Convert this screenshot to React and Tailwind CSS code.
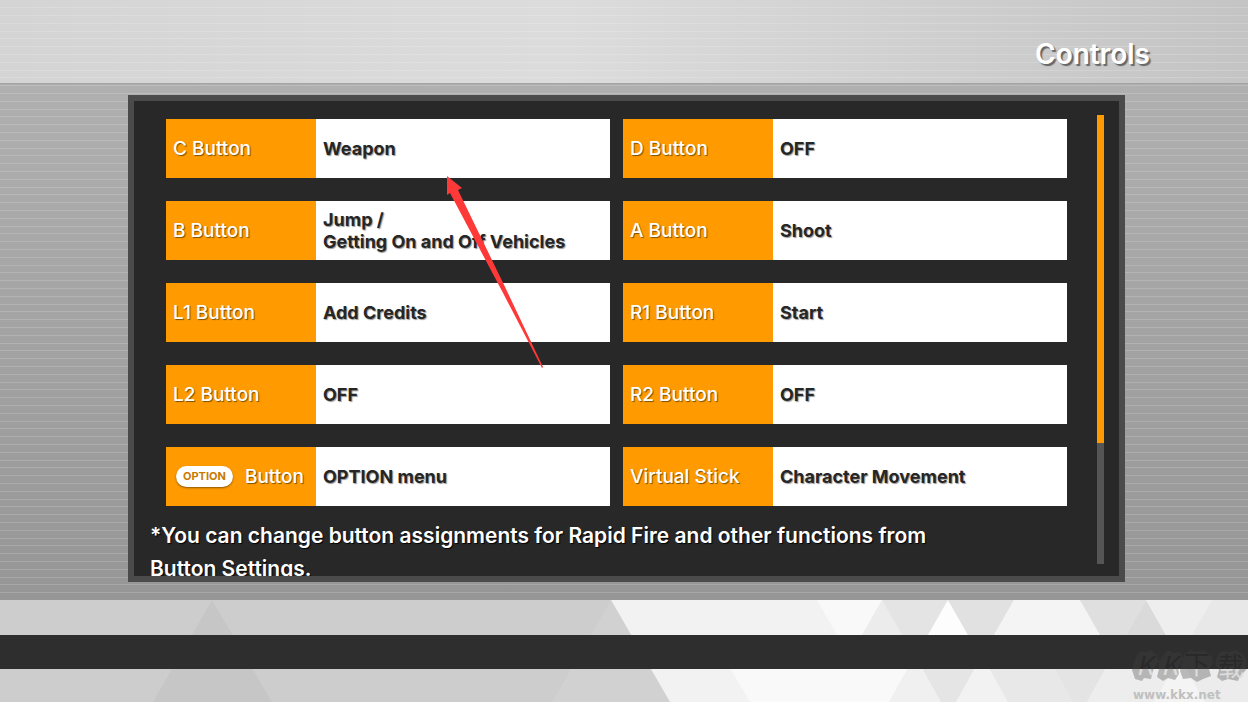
const rows = [
  { id: "c", label: "C Button", value: "Weapon" },
  { id: "d", label: "D Button", value: "OFF" },
  { id: "b", label: "B Button", value: "Jump /\nGetting On and Off Vehicles" },
  { id: "a", label: "A Button", value: "Shoot" },
  { id: "l1", label: "L1 Button", value: "Add Credits" },
  { id: "r1", label: "R1 Button", value: "Start" },
  { id: "l2", label: "L2 Button", value: "OFF" },
  { id: "r2", label: "R2 Button", value: "OFF" },
  { id: "option", badge: "OPTION", label: "Button", value: "OPTION menu" },
  { id: "stick", label: "Virtual Stick", value: "Character Movement" },
];

export default function App() {
  return (
    <div className="relative flex h-screen flex-col overflow-hidden bg-linear-to-b from-[#b4b4b4] to-[#919191] font-['Inter','Liberation_Sans',sans-serif]">
      <header className="flex h-[83px] shrink-0 items-center justify-end bg-linear-to-r from-[#d4d4d4] via-[#dcdcdc] via-45% to-[#c4c4c4] pt-6 pr-[98px] shadow-[0_1px_1px_#a4a4a4]">
        <h1 className="relative z-10 text-[28px] leading-8 font-semibold text-white [text-shadow:2px_2px_1px_#666]">Controls</h1>
      </header>
      <Stripes />

      <main className="relative flex min-h-0 flex-1 pt-3 pr-[123px] pb-[18px] pl-32">
        <section className="flex min-w-0 flex-1 overflow-hidden border-[6px] border-[#4b4b4b] bg-[#282828]">
          <div className="min-w-0 flex-1 pt-[18px] pl-4">
            <dl className="grid grid-cols-2 gap-x-[13px] gap-y-[23px] pl-4">
              {rows.map((row) => (
                <Assignment key={row.id} {...row} />
              ))}
            </dl>
            <p className="mt-[13px] max-w-[820px] text-[21px] leading-[33px] font-semibold text-white [text-shadow:1px_1px_1px_#000]">
              *You can change button assignments for Rapid Fire and other functions from Button Settings.
            </p>
          </div>
          <div className="mt-3.5 mr-[15px] mb-3 ml-[30px] flex w-[7px] flex-col bg-[#555]">
            <div className="h-[73%] bg-[#ff9b00]" />
          </div>
        </section>
      </main>

      <footer className="relative flex h-[102px] shrink-0 flex-col pt-[35px]">
        <Triangles />
        <div className="relative h-[34px] bg-[#2e2e2e]" />
        <Watermark />
      </footer>

      <Arrow />
    </div>
  );
}

function Assignment({ label, value, badge }) {
  return (
    <div className="flex h-[59px] bg-white">
      <dt className="flex w-[150px] shrink-0 items-center bg-[#ff9b00] pl-[7px] text-[19px] leading-[22px] font-medium text-white [text-shadow:1px_1px_1px_#7a5000]">
        {badge ? (
          <span className="mr-3 ml-[3px] rounded-full bg-white px-[7px] text-[11px] leading-[21px] font-bold text-[#c87a00] shadow-[0_1px_2px_#8a5500] [text-shadow:none]">
            {badge}
          </span>
        ) : null}
        {label}
      </dt>
      <dd className="flex items-center pl-[7px] text-[18px] leading-[22px] font-bold whitespace-pre-line text-[#262626] [text-shadow:1px_1px_1px_#999]">
        {value}
      </dd>
    </div>
  );
}

// five scanlines per 39px tile
function Stripes() {
  return (
    <svg className="absolute inset-0 size-full" aria-hidden="true">
      <defs>
        <pattern id="stripes" width="39" height="39" patternUnits="userSpaceOnUse">
          <path d="M0 7.5H39M0 15.5H39M0 23.5H39M0 31.5H39M0 38.5H39" stroke="#fff" strokeOpacity=".16" />
        </pattern>
      </defs>
      <rect width="100%" height="100%" fill="url(#stripes)" />
    </svg>
  );
}

function Triangles() {
  return (
    <svg className="absolute inset-0 size-full" viewBox="0 0 1248 102" preserveAspectRatio="none" aria-hidden="true">
      <rect width="1248" height="102" fill="#cdcdcd" />
      <path d="M212 0 153 102H272Z" fill="#c6c6c6" />
      <path d="M611 0 552 102H670Z" fill="#d1d1d1" />
      <path d="M611 0H1248V102H670Z" fill="#f2f2f2" />
      <path d="M817 0H882L863 35H837Z" fill="#f9f9f9" />
      <path d="M882 0 862 35H902Z" fill="#ececec" />
      <path d="M882 0H948L928 35H902Z" fill="#e4e4e4" />
      <path d="M948 0 928 35H968Z" fill="#fdfdfd" />
      <path d="M948 0H1014L994 35H968Z" fill="#e1e1e1" />
      <path d="M1014 0H1080L1100 35H994Z" fill="#f4f4f4" />
      <path d="M1080 0H1146L1126 35H1100Z" fill="#dfdfdf" />
      <path d="M1146 0 1126 35H1166Z" fill="#dadada" />
      <path d="M1146 0H1212L1192 35H1166Z" fill="#eee" />
      <path d="M1212 0H1248V35H1192Z" fill="#e8e8e8" />
      <path d="M730 68H908L889 102H750Z" fill="#f9f9f9" />
      <path d="M908 68H922L941 102H889Z" fill="#f0f0f0" />
      <path d="M922 68H975L956 102H941Z" fill="#e5e5e5" />
      <path d="M975 68H989L1008 102H956Z" fill="#f2f2f2" />
      <path d="M989 68H1054L1073 102H1008Z" fill="#e8e8e8" />
      <path d="M1054 68H1106L1087 102H1073Z" fill="#e4e4e4" />
      <path d="M1106 68H1174L1154 102H1087Z" fill="#ededed" />
      <path d="M1174 68H1186L1205 102H1154Z" fill="#f4f4f4" />
      <path d="M1186 68H1248V102H1205Z" fill="#ececec" />
    </svg>
  );
}

function Watermark() {
  return (
    <svg className="absolute right-0 bottom-0 h-[70px] w-[118px]" viewBox="0 -16 118 70" aria-label="KK下载">
      <defs>
        <linearGradient id="ink" gradientUnits="userSpaceOnUse" x1="0" y1="0" x2="0" y2="54">
          <stop offset=".385" stopColor="#292929" />
          <stop offset=".385" stopColor="#dcdcdc" />
        </linearGradient>
      </defs>
      <path
        d="M7 7 11 3 16 4 20 2 26 6 29 13 24 20 22 26 21 31 14 30 12 33 5 31 2 22 4 14Z M34 6 38 2 44 5 50 4 53 11 48 19 49 26 45 32 38 30 33 33 27 29 29 21 29 13Z M54 6 61 2 67 4 73 2 82 8 83 15 79 21 81 28 73 31 67 34 61 30 53 31 50 23 52 14Z M88 6 93 3 100 4 106 2 113 6 117 13 116 22 110 28 108 33 98 31 92 33 87 29 89 22 85 16Z"
        fill="#444"
        fillOpacity=".33"
      />
      <g fill="url(#ink)" fontFamily="'Noto Sans CJK SC', sans-serif">
        <text x="6" y="27" fontSize="26" fontStyle="italic">K</text>
        <text x="31" y="27" fontSize="26" fontStyle="italic">K</text>
        <text x="54" y="26" fontSize="26">下</text>
        <text x="88" y="28" fontSize="26">载</text>
      </g>
      <text x="3" y="51" fontSize="12" fontWeight="700" fontFamily="'DejaVu Sans', sans-serif" fill="#c0c0c0">www.kkx.net</text>
    </svg>
  );
}

function Arrow() {
  return (
    <svg className="absolute top-[176px] left-[446px] h-[193px] w-[98px]" viewBox="0 0 98 193" aria-hidden="true">
      <path d="M1 0 16 12 12 14 60 113 97 191 96 192 56 115 4 17 1 19Z" fill="#ff3838" />
    </svg>
  );
}
